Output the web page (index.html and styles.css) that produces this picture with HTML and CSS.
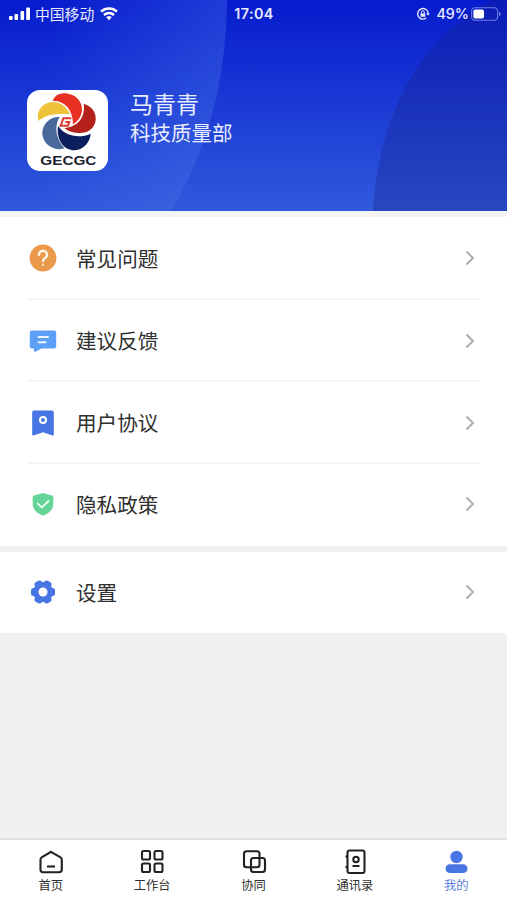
FILE: index.html
```
<!DOCTYPE html>
<html lang="zh-CN">
<head>
    <meta charset="UTF-8">
    <meta name="viewport" content="width=device-width, initial-scale=1.0">
    <title>我的</title>
    <link rel="stylesheet" href="styles.css">
</head>
<body>
    <header class="header">
        <svg class="header-bg" viewBox="0 0 507 211" preserveAspectRatio="none">
            <defs>
                <linearGradient id="light" x1="0" y1="0" x2="1" y2="0">
                    <stop offset="0.2" stop-color="#5080ec" stop-opacity="0"/>
                    <stop offset="1" stop-color="#5080ec" stop-opacity="0.32"/>
                </linearGradient>
            </defs>
            <path fill="url(#light)" d="M0 0H227C226 83 207 150 171 211H0Z"/>
            <path fill="#182080" fill-opacity="0.3" d="M373 211C379 115 419 44 479 8L492 0H507V211Z"/>
        </svg>
        <div class="status-bar">
            <div class="status-left">
                <svg width="22" height="14" viewBox="0 0 22 14" fill="#fff">
                    <rect x="0" y="9" width="3.6" height="4" rx="1"/>
                    <rect x="5.5" y="7" width="3.6" height="6" rx="1"/>
                    <rect x="11.5" y="4" width="3.6" height="9" rx="1"/>
                    <rect x="17.2" y="0.5" width="3.8" height="12.5" rx="1"/>
                </svg>
                <span class="carrier">中国移动</span>
                <svg width="18" height="14" viewBox="0 0 18 14" fill="none" stroke="#fff" stroke-width="2.5">
                    <path d="M1 4.6C5.6 0.4 12.4 0.4 17 4.6"/>
                    <path d="M4 8C7 5.4 11 5.4 14 8"/>
                    <path d="M6.3 10.2Q9 8 11.7 10.2L9 13.2Z" fill="#fff" stroke="none"/>
                </svg>
            </div>
            <span class="time">17:04</span>
            <div class="status-right">
                <svg width="14" height="14" viewBox="0 0 14 14" fill="none" stroke="#e4e8ff" stroke-width="1.4">
                    <path d="M12.2 6.5A5.3 5.3 0 1 0 10.2 11"/>
                    <path d="M10.3 6.2h3.5l-1.8 2.5z" fill="#e4e8ff" stroke="none"/>
                    <rect x="4.5" y="6.4" width="4.8" height="3.4" fill="#e4e8ff" stroke="none"/>
                    <path d="M5.5 6.5V5.2a1.4 1.4 0 0 1 2.8 0v1.3" stroke-width="1"/>
                </svg>
                <span class="battery-text">49%</span>
                <svg width="30" height="14" viewBox="0 0 30 14">
                    <rect x="0.6" y="0.7" width="26" height="12.6" rx="3.6" fill="none" stroke="#6f7ce4" stroke-width="1.1"/>
                    <rect x="2.4" y="2.5" width="10.6" height="9" rx="1.8" fill="#fff"/>
                    <path d="M28 4.8q1.8.7 1.8 2.2t-1.8 2.2z" fill="#6f7ce4"/>
                </svg>
            </div>
        </div>
        <div class="profile">
            <div class="avatar">
                <svg width="81" height="81" viewBox="22 28 243 243">
                    <path fill="#e83122" d="M99 60C107 42 122 37 138 38C168 41 186 62 187 84C188 106 174 122 160 131C160 95 143 61 99 60Z"/>
                    <path fill="#b3211a" d="M192 69C219 77 230 97 228 119C224 146 202 159 175 157C158 156 144 151 134 142C173 139 198 111 192 69Z"/>
                    <path fill="#0b1f5e" d="M115 136C136 166 178 175 213 159C212 184 191 207 166 209C133 210 109 178 115 136Z"/>
                    <path fill="#49699c" d="M120 108C101 139 111 178 135 203C106 212 75 195 69 166C64 136 85 109 120 108Z"/>
                    <path fill="#efc23b" d="M57 121C47 93 69 66 97 64C121 63 141 77 151 101C114 99 80 100 57 121Z"/>
                    <path fill="none" stroke="#dc3a2e" stroke-width="6" d="M155 113H131L123 135H145L149 124H137"/>
                    <text class="logo-text" x="62" y="253" textLength="168" lengthAdjust="spacingAndGlyphs">GECGC</text>
                </svg>
            </div>
            <div class="info">
                <div class="name">马青青</div>
                <div class="dept">科技质量部</div>
            </div>
        </div>
    </header>

    <main>
        <div class="menu">
            <div class="menu-item">
                <svg class="icon" viewBox="0 0 28 28">
                    <circle cx="14" cy="14" r="13.4" fill="#eb9a4b"/>
                    <path d="M10 10.8a4 4 0 1 1 6.2 3.3c-1.5 1-2.2 1.3-2.2 3" fill="none" stroke="#fff6ea" stroke-width="2.4" stroke-linecap="round"/>
                    <circle cx="14" cy="20.8" r="1.2" fill="#fbe0c2"/>
                </svg>
                <span class="label">常见问题</span>
                <svg class="arrow" viewBox="0 0 10 16"><path d="M1.5 1.5L8 8l-6.5 6.5"/></svg>
            </div>
            <div class="menu-item">
                <svg class="icon" viewBox="0 0 28 28">
                    <path fill="#5b9ff7" d="M3 3.5H25a2.2 2.2 0 0 1 2.2 2.2V19.3a2.2 2.2 0 0 1-2.2 2.2H12.5L6.5 24.7Q5 25.2 4.9 23.5V21.5H3A2.2 2.2 0 0 1 .8 19.3V5.7A2.2 2.2 0 0 1 3 3.5Z"/>
                    <path d="M9.5 10H19M9.5 15.2H16.5" stroke="#edf5ff" stroke-width="1.9" stroke-linecap="round"/>
                </svg>
                <span class="label">建议反馈</span>
                <svg class="arrow" viewBox="0 0 10 16"><path d="M1.5 1.5L8 8l-6.5 6.5"/></svg>
            </div>
            <div class="menu-item">
                <svg class="icon" viewBox="0 0 28 28">
                    <path fill="#4775e4" d="M5 1.5H23a1.8 1.8 0 0 1 1.8 1.8V25.2Q24.8 27 22.8 26.3L14 23.2L5.2 26.3Q3.2 27 3.2 25.2V3.3A1.8 1.8 0 0 1 5 1.5Z"/>
                    <circle cx="14" cy="11" r="3" fill="none" stroke="#fff" stroke-width="2"/>
                </svg>
                <span class="label">用户协议</span>
                <svg class="arrow" viewBox="0 0 10 16"><path d="M1.5 1.5L8 8l-6.5 6.5"/></svg>
            </div>
            <div class="menu-item">
                <svg class="icon" viewBox="0 0 28 28">
                    <path fill="#66d397" d="M14 3L23 5.5Q24.3 5.9 24.3 7.2V14C24.3 19.5 20 23.500 14 25.700C8 23.500 3.700 19.500 3.700 14V7.200Q3.700 5.900 5 5.500Z"/>
                    <path d="M8.8 13.7L12.8 17.4L19.5 11" fill="none" stroke="#effff5" stroke-width="1.8" stroke-linecap="round" stroke-linejoin="round"/>
                </svg>
                <span class="label">隐私政策</span>
                <svg class="arrow" viewBox="0 0 10 16"><path d="M1.5 1.5L8 8l-6.5 6.5"/></svg>
            </div>
        </div>
        <div class="menu menu-settings">
            <div class="menu-item">
                <svg class="icon" viewBox="0 0 28 28">
                    <g fill="#4775e4">
                        <circle cx="14" cy="14" r="10"/>
                        <rect x="2" y="10" width="24" height="8" rx="2.5"/>
                        <rect x="2" y="10" width="24" height="8" rx="2.5" transform="rotate(60 14 14)"/>
                        <rect x="2" y="10" width="24" height="8" rx="2.5" transform="rotate(120 14 14)"/>
                    </g>
                    <circle cx="14" cy="14" r="4.5" fill="#fff"/>
                </svg>
                <span class="label">设置</span>
                <svg class="arrow" viewBox="0 0 10 16"><path d="M1.5 1.5L8 8l-6.5 6.5"/></svg>
            </div>
        </div>
    </main>

    <nav class="tab-bar">
        <div class="tab">
            <svg class="tab-icon" viewBox="0 0 26 26">
                <path d="M13 2.8L22.5 8.3Q23.8 9 23.8 10.4V20.5Q23.8 23.2 21 23.2H5Q2.5 23.2 2.5 20.5V10.4Q2.5 9 3.7 8.3Z"/>
                <path d="M9 17.5H17"/>
            </svg>
            <span>首页</span>
        </div>
        <div class="tab">
            <svg class="tab-icon" viewBox="0 0 26 26">
                <rect x="3" y="2" width="8" height="8.5" rx="1.5"/>
                <rect x="15.5" y="2" width="8" height="8.5" rx="1.5"/>
                <rect x="3" y="14.5" width="8" height="8.5" rx="1.5"/>
                <rect x="15.5" y="14.5" width="8" height="8.5" rx="1.5"/>
            </svg>
            <span>工作台</span>
        </div>
        <div class="tab">
            <svg class="tab-icon" viewBox="0 0 26 26">
                <rect x="3" y="2.3" width="15.5" height="16" rx="2.5"/>
                <rect x="10" y="9" width="14" height="14" rx="2.5"/>
            </svg>
            <span>协同</span>
        </div>
        <div class="tab">
            <svg class="tab-icon" viewBox="0 0 26 26">
                <rect x="5.5" y="1.5" width="17" height="22.5" rx="2"/>
                <circle cx="14" cy="10.5" r="2.7"/>
                <path d="M10.5 17H17.5M3.5 7.5H6M3.5 18H6"/>
            </svg>
            <span>通讯录</span>
        </div>
        <div class="tab active">
            <svg class="tab-icon" viewBox="0 0 26 26">
                <circle cx="13.5" cy="8" r="6.2"/>
                <rect x="2.5" y="15.3" width="22" height="8.7" rx="4.35"/>
            </svg>
            <span>我的</span>
        </div>
    </nav>
</body>
</html>
```

FILE: styles.css
```
* {
    box-sizing: border-box;
}
body {
    margin: 0;
    height: 900px;
    display: flex;
    flex-direction: column;
    overflow: hidden;
    background-color: #f0f0f0;
    color: #303030;
    font-family: "Noto Sans CJK SC", sans-serif;
}
svg {
    display: block;
    flex-shrink: 0;
}
.header {
    position: relative;
    height: 211px;
    background: linear-gradient(#061bcd, #3059dc);
    color: #fff;
}
.header-bg {
    position: absolute;
    top: 0;
    left: 0;
    width: 100%;
    height: 100%;
}
.status-bar {
    position: relative;
    display: grid;
    grid-template-columns: 1fr auto 1fr;
    align-items: center;
    height: 27px;
    padding: 0 6px 0 9px;
    color: #e8ebff;
}
.status-left, .status-right {
    display: flex;
    align-items: center;
}
.status-right {
    justify-content: flex-end;
}
.carrier {
    margin: 0 6px 0 4px;
    font-size: 14.8px;
    line-height: 20px;
}
.time {
    margin-right: 2px;
    font-family: Inter, sans-serif;
    font-size: 14.3px;
    font-weight: 600;
    letter-spacing: 0.4px;
}
.battery-text {
    margin: 0 2px 0 6px;
    font-family: Inter, sans-serif;
    font-size: 14.3px;
    font-weight: 500;
}
.profile {
    position: relative;
    display: flex;
    padding: 63px 0 0 27px;
}
.avatar {
    width: 81px;
    height: 81px;
    border-radius: 13px;
    background-color: #fff;
}
.logo-text {
    font-family: "Liberation Sans", Arial, sans-serif;
    font-size: 40px;
    font-weight: bold;
    fill: #1c2130;
}
.info {
    margin: -1px 0 0 22px;
    color: #e8edff;
}
.name {
    font-size: 23px;
    line-height: 29px;
}
.dept {
    font-size: 20.5px;
    line-height: 29px;
}
.menu {
    padding: 0 27px 0 28px;
    border-top: 6px solid #f4f4f4;
    background-color: #fff;
}
.menu-item {
    display: flex;
    align-items: center;
    height: 82px;
    padding: 1px 5px 0 1px;
    border-bottom: 2px solid #f5f5f5;
}
.menu-item:first-child {
    height: 83px;
}
.menu-item:last-child {
    padding-top: 0;
    padding-bottom: 2px;
    border-bottom: none;
}
.menu-settings {
    border-top-color: #f0f0f0;
}
.menu-settings .menu-item {
    height: 81px;
    padding-bottom: 1px;
}
.icon {
    width: 28px;
    height: 28px;
}
.label {
    flex: 1;
    margin-left: 19px;
    font-size: 20.6px;
    line-height: 28px;
    padding-bottom: 1px;
}
.arrow {
    width: 10px;
    height: 16px;
    fill: none;
    stroke: #aaa;
    stroke-width: 1.8;
}
.tab-bar {
    display: flex;
    height: 62px;
    margin-top: auto;
    border-top: 2px solid #e2e2e2;
    background-color: #fff;
}
.tab {
    flex: 1;
    display: flex;
    flex-direction: column;
    align-items: center;
    padding-top: 9px;
    font-size: 12.3px;
    line-height: 20px;
}
.tab-icon {
    width: 26px;
    height: 26px;
    fill: none;
    stroke: #222;
    stroke-width: 2.1;
}
.active {
    color: #5b7fdc;
}
.active .tab-icon {
    fill: #4775e4;
    stroke: none;
}
```
